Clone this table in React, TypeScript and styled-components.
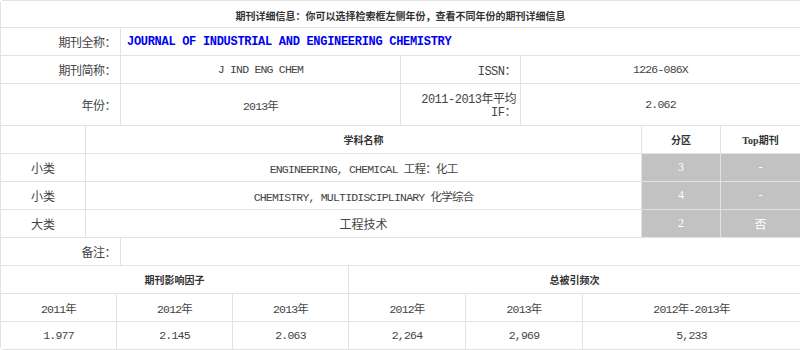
import React from "react";
import styled, { createGlobalStyle } from "styled-components";

const Global = createGlobalStyle`
  html, body { margin: 0; padding: 0; background: #ffffff; }
  body { font-family: "Liberation Mono", "Noto Sans CJK SC", monospace; }
`;

const Page = styled.div`
  width: 800px;
  box-sizing: border-box;
  padding: 1px 0 1px 1px;
  background: #e2e2e2;
  display: flex;
  flex-direction: column;
  gap: 1px;
  border-radius: 4px 0 0 4px;
  overflow: hidden;
`;

const TitleBar = styled.div`
  height: 26px;
  box-sizing: border-box;
  padding-top: 2px;
  background: #fff;
  display: flex;
  align-items: center;
  justify-content: center;
  font: bold 10px "Noto Sans CJK SC", sans-serif;
  color: #333;
`;

const Grid = styled.div<{ $cols: string; $rows: string }>`
  display: grid;
  grid-template-columns: ${(p) => p.$cols};
  grid-template-rows: ${(p) => p.$rows};
  gap: 1px;
`;

const Base = styled.div<{ $span?: number }>`
  background: #fff;
  display: flex;
  align-items: center;
  box-sizing: border-box;
  color: #444;
  grid-column: ${(p) => (p.$span ? `span ${p.$span}` : "auto")};
`;

const Label = styled(Base)`
  justify-content: flex-end;
  text-align: right;
  padding: 0 4px 0 8px;
  font: 12px "Liberation Mono", "Noto Sans CJK SC", monospace;
  letter-spacing: -0.5px;
`;

const WrapLabel = styled(Label)`
  line-height: 13px;
  padding-top: 4px;
`;

const Value = styled(Base)`
  justify-content: center;
  text-align: center;
  font: 11.5px "Liberation Mono", "Noto Sans CJK SC", monospace;
  letter-spacing: -0.8px;
`;

const CjkValue = styled(Value)`
  font-size: 12px;
  letter-spacing: 0;
`;

const LinkValue = styled(Base)`
  justify-content: flex-start;
  padding-left: 6px;
  font: bold 12px "Liberation Mono", "Noto Sans CJK SC", monospace;
  letter-spacing: -0.3px;
  color: #0000f0;
`;

const Head = styled(Base)`
  justify-content: center;
  font: bold 10px "Noto Sans CJK SC", sans-serif;
  color: #333;
`;

const TopHead = styled(Head)`
  font-family: "Liberation Serif", "Noto Sans CJK SC", serif;
  font-size: 10px;
`;

const Shade = styled(Base)`
  justify-content: center;
  background: #c2c2c2;
  color: #fff;
  font: 12px "Liberation Serif", "Noto Sans CJK SC", serif;
`;

const categories = [
  { kind: "小类", name: "ENGINEERING, CHEMICAL 工程：化工", zone: "3", top: "-", cjk: false },
  { kind: "小类", name: "CHEMISTRY, MULTIDISCIPLINARY 化学综合", zone: "4", top: "-", cjk: false },
  { kind: "大类", name: "工程技术", zone: "2", top: "否", cjk: true },
];

const years = ["2011年", "2012年", "2013年", "2012年", "2013年", "2012年-2013年"];
const values = ["1.977", "2.145", "2.063", "2,264", "2,969", "5,233"];

export default function App() {
  return (
    <>
      <Global />
      <Page>
        <TitleBar>期刊详细信息：你可以选择检索框左侧年份，查看不同年份的期刊详细信息</TitleBar>

        <Grid $cols="119px 279px 119px 1fr" $rows="27px 27px 41px">
          <Label>期刊全称：</Label>
          <LinkValue $span={3}>JOURNAL OF INDUSTRIAL AND ENGINEERING CHEMISTRY</LinkValue>
          <Label>期刊简称：</Label>
          <Value>J IND ENG CHEM</Value>
          <Label>ISSN：</Label>
          <Value>1226-086X</Value>
          <Label>年份：</Label>
          <Value>2013年</Value>
          <WrapLabel>2011-2013年平均IF：</WrapLabel>
          <Value>2.062</Value>
        </Grid>

        <Grid $cols="84px 555px 78px 1fr" $rows="27px 27px 27px 27px">
          <Head />
          <Head>学科名称</Head>
          <Head>分区</Head>
          <TopHead>Top期刊</TopHead>
          {categories.map((c, i) => (
            <React.Fragment key={i}>
              <CjkValue>{c.kind}</CjkValue>
              {c.cjk ? <CjkValue>{c.name}</CjkValue> : <Value>{c.name}</Value>}
              <Shade>{c.zone}</Shade>
              <Shade>{c.top}</Shade>
            </React.Fragment>
          ))}
        </Grid>

        <Grid $cols="119px 1fr" $rows="27px">
          <Label>备注：</Label>
          <Value />
        </Grid>

        <Grid $cols="115px 115px 115px 116px 116px 1fr" $rows="27px 27px 27px">
          <Head $span={3}>期刊影响因子</Head>
          <Head $span={3}>总被引频次</Head>
          {years.map((y, i) => (
            <Value key={`y${i}`}>{y}</Value>
          ))}
          {values.map((v, i) => (
            <Value key={`v${i}`}>{v}</Value>
          ))}
        </Grid>
      </Page>
    </>
  );
}
